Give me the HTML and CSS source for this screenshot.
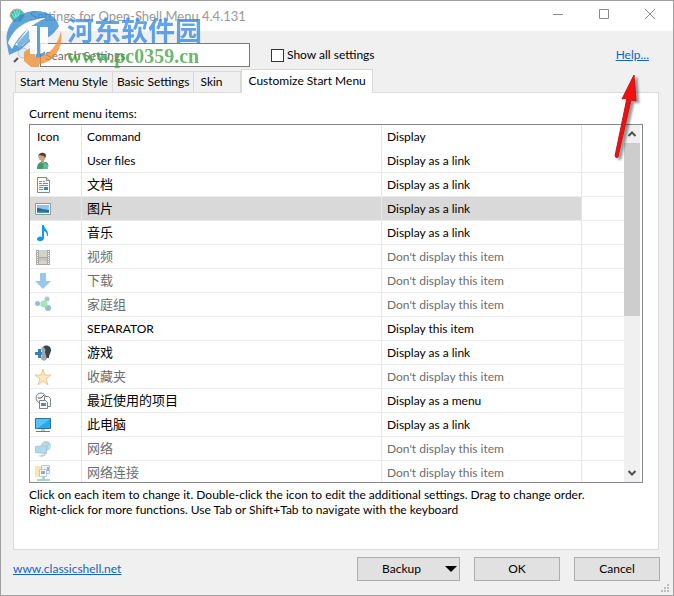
FILE: index.html
```html
<!DOCTYPE html>
<html lang="en">
<head>
<meta charset="utf-8">
<title>Settings for Open-Shell Menu 4.4.131</title>
<link rel="stylesheet" href="styles.css">
</head>
<body>
<div class="window">
  <header class="titlebar">
    <svg class="app-icon" viewBox="0 0 18 18" aria-hidden="true">
      <path d="M1 9 2 5l3-3 4-1 4 1 3 3 1 4-4 6H5z" fill="#35c0b4" stroke="#e0a568"/>
      <path d="M9 15 3 6M9 15 6 3M9 15V2M9 15l3-12M9 15l6-9" stroke="#a5ece4" fill="none"/>
    </svg>
    <h1 class="title">Settings for Open-Shell Menu 4.4.131</h1>
    <div class="captions">
      <button class="caption" aria-label="Minimize"><svg viewBox="0 0 12 12"><path d="M1 6.500h10"/></svg></button>
      <button class="caption" aria-label="Maximize"><svg viewBox="0 0 12 12"><path d="M1.500 1.500h9v9h-9z"/></svg></button>
      <button class="caption" aria-label="Close"><svg viewBox="0 0 12 12"><path d="M1 1l10 10M11 1 1 11"/></svg></button>
    </div>
  </header>

  <div class="toolbar">
    <svg class="search-icon" viewBox="0 0 16 16" aria-hidden="true">
      <path d="M1 15l4-4" stroke="#555" stroke-width="2"/>
      <circle cx="10" cy="6" r="5" fill="#dfeaf3" stroke="#b9c7d2"/>
    </svg>
    <input class="search" type="text" placeholder="Search Settings" aria-label="Search Settings">
    <label class="check"><input type="checkbox"> Show all settings</label>
    <a class="help" href="#help">Help...</a>
  </div>

  <nav class="tabs" role="tablist">
    <button class="tab" role="tab">Start Menu Style</button>
    <button class="tab" role="tab">Basic Settings</button>
    <button class="tab tab-skin" role="tab">Skin</button>
    <button class="tab tab-active" role="tab" aria-selected="true">Customize Start Menu</button>
  </nav>

  <main class="panel">
    <h2 class="list-label" id="list-label">Current menu items:</h2>
    <div class="listbox">
      <div class="list-view">
        <table class="items" aria-labelledby="list-label">
          <colgroup><col class="col-icon"><col class="col-command"><col class="col-display"><col></colgroup>
          <thead>
            <tr><th>Icon</th><th>Command</th><th>Display</th><th></th></tr>
          </thead>
          <tbody>
            <tr><td><svg viewBox="0 0 18 18"><path d="M2 17c0-4 1-6 4-7l5 0c3 1 3 5 1 7z" fill="#3f9a70"/><path d="M9 10l4 3 0 4H8z" fill="#6bb894"/><path d="M6 8h3v3l-1 1-2-2z" fill="#c99a78"/><circle cx="7" cy="5" r="3.500" fill="#d0a080"/><path d="M3 5C3 0 11-1 11 4l-1 2-1-2-5-1z" fill="#4f3c30"/></svg></td><td>User files</td><td>Display as a link</td><td></td></tr>
            <tr><td><svg viewBox="0 0 18 18"><path d="M2.500 1.500h9l3 3v12h-12z" fill="#fff" stroke="#7d8a92"/><path d="M11.500 1.500v3h3" fill="#dde5ea" stroke="#7d8a92"/><path d="M4 5.500h3M8 5.500h2M4 7.500h3M8 7.500h5M4 9.500h9M4 11.500h4M4 13.500h4" stroke="#3aa0d8"/><path d="M9 11h4v3H9z" fill="#2886c4"/></svg></td><td class="cjk">文档</td><td>Display as a link</td><td></td></tr>
            <tr class="selected"><td><svg viewBox="0 0 18 18"><path d="M.5 3.500h15v11H.5z" fill="#fff" stroke="#8b9aa5"/><path d="M2 5h12v8H2z" fill="#8ac6ee"/><path d="M2 8c4 0 7 2 12 2v3H2z" fill="#286a9c"/><path d="M2 12c4-1 8 0 12 0v1H2z" fill="#4a9c9b"/></svg></td><td class="cjk">图片</td><td>Display as a link</td><td></td></tr>
            <tr><td><svg viewBox="0 0 18 18"><path d="M7 1h2c0 4 5 5 4 11h-1c0-3-1-4-3-5v7c0 4-7 4-7 1 0-2 3-3 5-2z" fill="#159be6"/></svg></td><td class="cjk">音乐</td><td>Display as a link</td><td></td></tr>
            <tr class="hidden-item"><td><svg viewBox="0 0 18 18"><path d="M1 2h14v15H1z" fill="#555"/><path d="M4 2h8v7H4z" fill="#83aec4"/><path d="M4 10h8v6H4z" fill="#728ea9"/><path d="M4 7l3-3 5 3v2H4zM4 14l4-2 4 2v2H4z" fill="#c4ac66"/><path d="M2.500 3v14M13.500 3v14" stroke="#fff" stroke-dasharray="1 1"/></svg></td><td class="cjk">视频</td><td>Don't display this item</td><td></td></tr>
            <tr class="hidden-item"><td><svg viewBox="0 0 18 18"><path d="M5 1h6v8h5l-8 8-8-8h5z" fill="#378ed8"/></svg></td><td class="cjk">下载</td><td>Don't display this item</td><td></td></tr>
            <tr class="hidden-item"><td><svg viewBox="0 0 18 18"><path d="M3 8l8-4M3 8l10 4" stroke="#9ec5da"/><circle cx="2.500" cy="7.500" r="2.500" fill="#2c7fa8"/><circle cx="12" cy="3" r="2.500" fill="#4b94a4"/><circle cx="13" cy="12" r="3" fill="#2c7fa8"/><circle cx="9" cy="8" r="3.500" fill="#4fc96e"/></svg></td><td class="cjk">家庭组</td><td>Don't display this item</td><td></td></tr>
            <tr><td></td><td>SEPARATOR</td><td>Display this item</td><td></td></tr>
            <tr><td><svg viewBox="0 0 18 18"><path d="M0 8h3V5h3v3h3v3H6v3H3v-3H0z" fill="#3480b8"/><path d="M8 3c3-3 8-1 8 3 0 3-2 4-2 8h-3z" fill="#3d444a"/><path d="M7 3c3 0 4 3 3 5l2 7-3 2-3-2 1-7c-1-2-1-4 0-5z" fill="#9aa8b0"/></svg></td><td class="cjk">游戏</td><td>Display as a link</td><td></td></tr>
            <tr class="hidden-item"><td><svg viewBox="0 0 18 18"><path d="M8 1l2 6h6l-5 4 2 6-5-4-5 4 2-6-5-4h6z" fill="#fbd183" stroke="#dc8e29"/></svg></td><td class="cjk">收藏夹</td><td>Don't display this item</td><td></td></tr>
            <tr><td><svg viewBox="0 0 18 18"><circle cx="6" cy="6" r="5" fill="#f4f7f8" stroke="#7b8589"/><path d="M6 6l3-3M3 6h3" stroke="#555" fill="none"/><path d="M9.500 4.500h4l2 2v8h-6z" fill="#fff" stroke="#7b8589"/><path d="M4.500 8.500h6l2 2v6h-8z" fill="#fff" stroke="#7b8589"/><path d="M6 11h5v3H6z" fill="#5a8ab4"/></svg></td><td class="cjk">最近使用的项目</td><td>Display as a menu</td><td></td></tr>
            <tr><td><svg viewBox="0 0 18 18"><path d="M.5 2.500h15v10H.5z" fill="#29a9ed" stroke="#34718f"/><path d="M1 3h14L3 12H1z" fill="#54c3f8"/><path d="M1 15.500h14" stroke="#607f8b"/><path d="M6 13h4v2H6z" fill="#b8c5ca"/></svg></td><td class="cjk">此电脑</td><td>Display as a link</td><td></td></tr>
            <tr class="hidden-item"><td><svg viewBox="0 0 18 18"><circle cx="11" cy="6" r="5" fill="#60a7d0"/><path d="M8 3l4 1-2 4zM13 5l3 1-2 4z" fill="#9ad0a3"/><path d="M.5 6.500l11-1v8l-11-1z" fill="#58b8e8" stroke="#5b8da5"/><path d="M3 16l7-2 1 1-4 2z" fill="#849ba8"/></svg></td><td class="cjk">网络</td><td>Don't display this item</td><td></td></tr>
            <tr class="hidden-item"><td><svg viewBox="0 0 18 18"><path d="M0 2h6v11H0z" fill="#f1cf64"/><path d="M6.500 1.500h8v8h-8z" fill="#d9e8f5" stroke="#7d91a2"/><path d="M4.500 5.500h7v7h-7z" fill="#eef5fa" stroke="#7d91a2"/><path d="M6 7h4v3H6z" fill="#3947b5"/><path d="M12 3h2v4h-2z" fill="#3a62bd"/><path d="M7 13h3v2h5v2H2v-2h5z" fill="#4eae83"/></svg></td><td class="cjk">网络连接</td><td>Don't display this item</td><td></td></tr>
          </tbody>
        </table>
      </div>
      <div class="scrollbar" aria-hidden="true">
        <svg class="arrow" viewBox="0 0 16 16"><path d="M4.500 10 8 6.500l3.500 3.500"/></svg>
        <div class="track"><div class="thumb"></div></div>
        <svg class="arrow" viewBox="0 0 16 16"><path d="M4.500 6 8 9.500 11.500 6"/></svg>
      </div>
    </div>
    <p class="hint">Click on each item to change it. Double-click the icon to edit the additional settings. Drag to change order.<br>Right-click for more functions. Use Tab or Shift+Tab to navigate with the keyboard</p>
  </main>

  <footer class="footer">
    <a class="site" href="#site">www.classicshell.net</a>
    <button class="btn btn-menu"><span>Backup</span><svg viewBox="0 0 12 6" aria-hidden="true"><path d="M0 0h12L6 6z"/></svg></button>
    <button class="btn">OK</button>
    <button class="btn">Cancel</button>
  </footer>

  <svg class="grip" viewBox="0 0 9 9" aria-hidden="true"><path d="M6 0h2v2H6zM3 3h2v2H3zM6 3h2v2H6zM0 6h2v2H0zM3 6h2v2H3zM6 6h2v2H6z" fill="#bdbdbd"/></svg>

  <svg class="pointer" viewBox="0 0 36 90" aria-hidden="true">
    <path d="M25 2 13 26l5-1L6 83q1 3 3 1L22 27l5 1z" fill="#f01010" stroke="#c81313"/>
  </svg>

  <div class="watermark" aria-hidden="true">
    <svg class="mark-logo" viewBox="0 0 58 58">
      <path d="M2 34C-1 16 12 1 31 1c13 0 21 7 23 15-4 7-9 10-14 14V50h-9V26L15 40 4 45z" fill="#2d86cc"/>
      <path d="M56 21c3 19-9 32-22 33v3h-8l-7-6v-9l9-6 3 12c12-2 21-11 25-27z" fill="#f08a2c"/>
      <path d="M3 33C8 18 22 9 41 8 27 14 15 23 7 39z" fill="#fff"/>
      <path d="M10 35l15-19h7v28h-7V29l-8 7zM35 17h8v21c-2 3-5 5-8 6z" fill="#fff"/>
      <path d="M12 33l12-13v10l-10 8z" fill="#5ba5dc"/>
    </svg>
    <div class="mark-text">
      <span class="mark-name">河东软件园</span>
      <span class="mark-url">www.pc0359.cn</span>
    </div>
  </div>
</div>
</body>
</html>
```

FILE: styles.css
```css
* { box-sizing: border-box; }
body {
  margin: 0;
  font: 12px/16px "Lato", "Noto Sans CJK SC", sans-serif;
  color: #000;
}
button, input { font: inherit; color: inherit; }
h1, h2, p { margin: 0; font-size: 12px; font-weight: 400; }
a { color: #1464c0; }
.window {
  position: relative;
  min-height: 100vh;
  display: flex;
  flex-direction: column;
  background: #f0f0f0;
  border: 1px solid #a0a0a0;
}
.titlebar {
  display: flex;
  align-items: center;
  height: 30px;
  padding-left: 8px;
  background: #fff;
}
.app-icon { width: 16px; height: 16px; }
.title { flex: 1; margin-left: 5px; font-size: 13px; color: #999; }
.captions { display: flex; }
.caption {
  width: 46px;
  height: 30px;
  padding: 0;
  border: 0;
  background: none;
}
.caption svg { width: 12px; height: 12px; fill: none; stroke: #8a8a8a; }
.toolbar {
  display: flex;
  align-items: center;
  padding: 12px 24px 0 12px;
}
.search-icon { width: 16px; height: 16px; }
.search {
  width: 210px;
  height: 24px;
  margin-left: 11px;
  padding: 0 4px;
  border: 1px solid #7a7a7a;
  background: #fff;
}
.search::placeholder { color: #6d6d6d; opacity: 1; }
.check { display: flex; align-items: center; gap: 3px; margin-left: 21px; }
.check input {
  appearance: none;
  width: 13px;
  height: 13px;
  margin: 0;
  border: 1px solid #333;
  background: #fff;
}
.help { margin-left: auto; }
.tabs { display: flex; align-items: flex-end; padding: 2px 14px 0; }
.tab {
  height: 21px;
  padding: 0 4px;
  border: 1px solid #d9d9d9;
  border-left-width: 0;
  border-bottom: 0;
  background: #f0f0f0;
  white-space: nowrap;
}
.tab:first-child { border-left-width: 1px; }
.tab-skin { width: 47px; padding: 0 6px; text-align: left; }
.tab-active {
  height: 24px;
  margin-bottom: -1px;
  padding: 0 6px 2px;
  border-left-width: 1px;
  background: #fff;
  position: relative;
}
.panel {
  flex: 1;
  margin: 0 14px 0 12px;
  padding: 13px 15px 0;
  border: 1px solid #dcdcdc;
  background: #fff;
}
.list-label { margin-bottom: 2px; }
.listbox {
  display: flex;
  height: 359px;
  border: 1px solid #828790;
}
.list-view { flex: 1; overflow: hidden; }
.items {
  width: 100%;
  border-collapse: separate;
  border-spacing: 0;
  table-layout: fixed;
}
.col-icon { width: 52px; }
.col-command { width: 300px; }
.col-display { width: 200px; }
.items th, .items td {
  height: 24px;
  padding: 0 5px;
  border-right: 1px solid #e5e5e5;
  border-bottom: 1px solid #ececec;
  text-align: left;
  font-weight: 400;
  white-space: nowrap;
}
.items th { border-bottom-color: #fff; }
.items th:last-child, .items td:last-child { border-right: 0; }
.items th:first-child { padding-left: 7px; }
.items svg { display: block; width: 18px; height: 18px; }
.items .cjk {
  padding-bottom: 2px;
  font-family: "Noto Sans CJK SC", sans-serif;
  font-size: 13px;
}
.selected td { background: #d9d9d9; }
.selected td:last-child { background: #fff; }
.hidden-item { color: #6d6d6d; }
.hidden-item svg { opacity: 0.5; }
.scrollbar {
  display: flex;
  flex-direction: column;
  width: 16px;
  margin-right: 2px;
  background: #f0f0f0;
}
.arrow { width: 16px; height: 18px; fill: none; stroke: #505050; stroke-width: 2; }
.track { flex: 1; }
.thumb { height: 54%; background: #cdcdcd; }
.hint { margin-top: 4px; line-height: 15px; }
.footer {
  display: flex;
  align-items: center;
  gap: 14px;
  padding: 7px 13px 14px 12px;
}
.site { margin-right: auto; }
.btn {
  width: 86px;
  height: 24px;
  padding: 0;
  border: 1px solid #adadad;
  background: #e1e1e1;
}
.btn-menu { display: flex; align-items: center; width: 103px; padding-right: 2px; }
.btn-menu span { flex: 1; }
.btn-menu svg { width: 12px; height: 6px; }
.grip { position: absolute; right: 3px; bottom: 2px; width: 9px; height: 9px; }
.pointer {
  position: absolute;
  right: 28px;
  top: 72px;
  width: 36px;
  height: 90px;
  filter: drop-shadow(3px 2px 1px rgba(0, 0, 0, 0.4));
}
.watermark {
  position: absolute;
  left: 4px;
  top: 9px;
  display: flex;
  gap: 4px;
  opacity: 0.75;
  pointer-events: none;
}
.mark-logo { width: 58px; height: 58px; }
.mark-text { display: flex; flex-direction: column; padding-top: 4px; }
.mark-name { font: 700 27px/32px "Noto Sans CJK SC", sans-serif; color: #2f86e0; }
.mark-url { font: 700 20px/20px "Liberation Serif", serif; color: #3aa23a; }
```
